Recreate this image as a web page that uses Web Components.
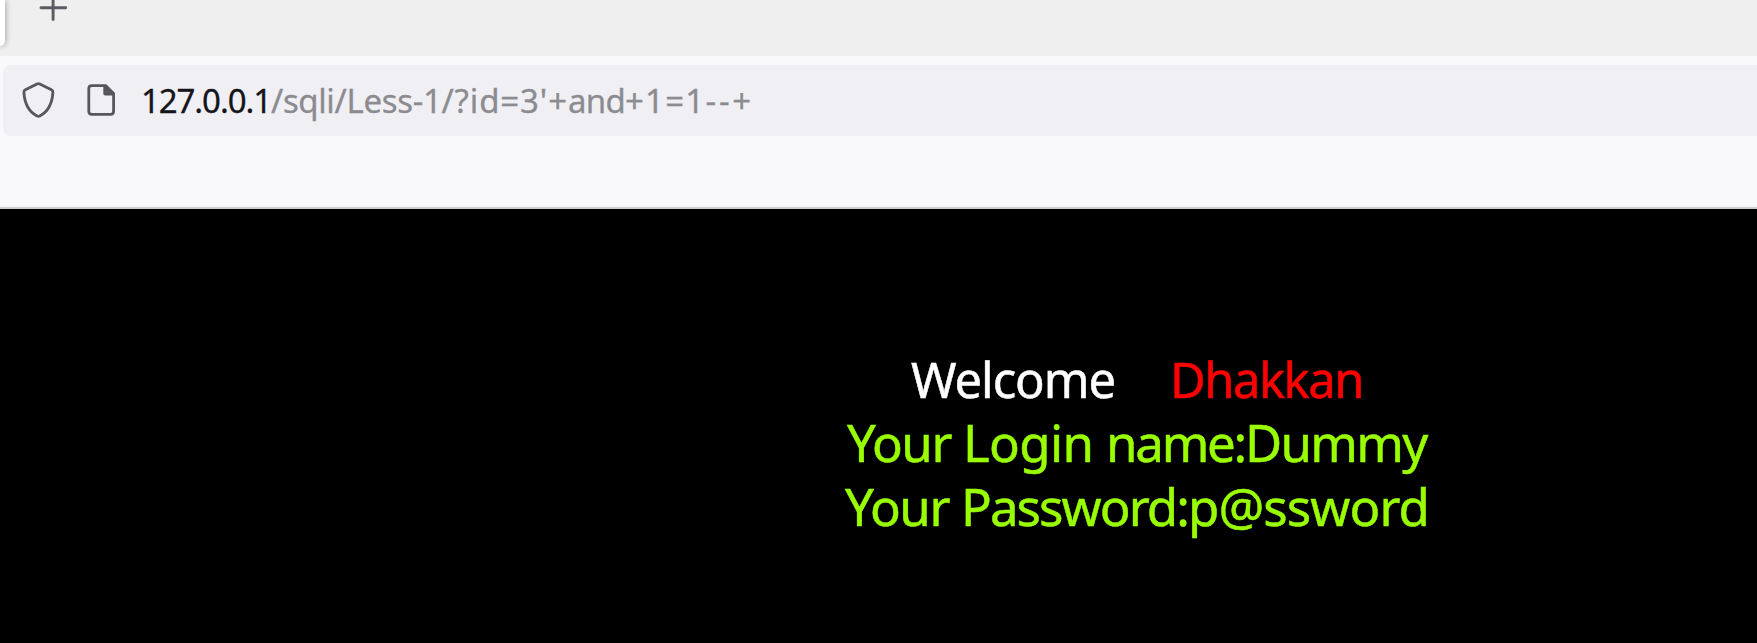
<!DOCTYPE html>
<html lang="en">
<head>
<meta charset="utf-8">
<title>Less-1</title>
<style>
html,body{margin:0;height:100%;overflow:hidden;background:#000}
body{font-family:"Noto Sans","Open Sans",sans-serif}
</style>
</head>
<body>
<browser-window></browser-window>
<script>
// Inline text run whose tracking is adjusted so that it spans a given advance width.
customElements.define('text-run', class extends HTMLElement {
  connectedCallback() {
    this.attachShadow({mode:'open'}).innerHTML = '<style>:host{display:inline;white-space:pre}</style><slot></slot>';
    const target = parseFloat(this.getAttribute('span'));
    const natural = this.getBoundingClientRect().width;
    this.style.letterSpacing = ((target - natural) / this.textContent.length).toFixed(4) + 'px';
  }
});

customElements.define('tab-strip', class extends HTMLElement {
  connectedCallback() {
    this.attachShadow({mode:'open'}).innerHTML = `<style>
      :host{display:flex;align-items:flex-start;height:56px;background:#efefef;overflow:hidden}
      .tab{width:5px;height:46px;background:#fff;border-radius:0 0 5px 0;box-shadow:0 0 6px rgba(0,0,0,.42)}
      svg{display:block;margin-left:33px}
    </style><div class="tab"></div>
    <svg width="32" height="24" viewBox="0 0 32 24" fill="none" stroke="#5b5b66" stroke-width="2.9" stroke-linecap="round"><path d="M3 7.7H27.7M15.1-4V19.6"/></svg>`;
  }
});

customElements.define('address-bar', class extends HTMLElement {
  connectedCallback() {
    this.attachShadow({mode:'open'}).innerHTML = `<style>
      :host{display:block;height:153px;box-sizing:border-box;padding:9px 0 0 3px;background:#f9f9fb;border-bottom:2px solid #cccecf}
      .field{display:flex;height:71px;box-sizing:border-box;background:#f0f0f4;border-radius:8px 0 0 8px}
      svg{display:block;flex:none}
      .url{margin-left:19px;font-size:33px;line-height:45px;padding-top:13px;color:#8b8b90;white-space:nowrap;-webkit-text-stroke:.3px currentColor}
      .host{color:#15141a}
    </style><div class="field">
      <svg width="119" height="71" viewBox="3 65 119 71" fill="none" stroke="#56565b" stroke-width="2.8" stroke-linejoin="round">
        <path d="M37 83.9Q38.4 83.2 39.8 83.9L51.4 89.8Q53 90.6 52.9 92.3C52.2 103.8 48.6 111.3 39.8 115.9Q38.4 116.7 37 115.9C28.2 111.3 24.6 103.8 23.9 92.3Q23.8 90.6 25.4 89.8Z"/>
        <path d="M91.8 85.6H105.6L113.6 93.5V111.3Q113.6 114.3 110.6 114.3H91.8Q88.8 114.3 88.8 111.3V88.6Q88.8 85.6 91.8 85.6Z"/>
        <path d="M103.3 85.6H105.6L113.6 93.5V95.4H105.3Q103.3 95.4 103.3 93.4Z" fill="#56565b" stroke="none"/>
      </svg>
      <div class="url"><span class="host"><text-run span="130">127.0.0.1</text-run></span><text-run span="63.5">/sqli</text-run><text-run span="107">/Less-1</text-run><text-run span="78.5">/?id=</text-run><text-run span="48">3'+</text-run><text-run span="57">and</text-run><text-run span="80.5">+1=1</text-run><text-run span="48.5">--+</text-run></div>
    </div>`;
  }
});

customElements.define('welcome-page', class extends HTMLElement {
  connectedCallback() {
    this.attachShadow({mode:'open'}).innerHTML = `<style>
      :host{display:block;flex:1;background:#000;padding:139px 0 0 845px;white-space:nowrap;-webkit-text-stroke:.5px currentColor}
      .line{height:64px;line-height:64px;font-size:51px;color:#9f0}
      .title{height:62px;line-height:63px;font-size:49px;color:#fff;padding-left:66px;display:flex;gap:55px}
      .name{color:red}
      .login{padding-left:2px}
    </style>
    <div class="line title"><div><text-run span="204">Welcome</text-run></div><div class="name"><text-run span="193">Dhakkan</text-run></div></div>
    <div class="line login"><text-run span="116">Your </text-run><text-run span="143">Login </text-run><text-run span="139">name:</text-run><text-run span="181.5">Dummy</text-run></div>
    <div class="line"><text-run span="116">Your </text-run><text-run span="227">Password:</text-run><text-run span="241">p@ssword</text-run></div>`;
  }
});

customElements.define('browser-window', class extends HTMLElement {
  connectedCallback() {
    this.attachShadow({mode:'open'}).innerHTML = `<style>:host{display:flex;flex-direction:column;height:100vh;overflow:hidden}</style>
    <tab-strip></tab-strip><address-bar></address-bar><welcome-page></welcome-page>`;
  }
});
</script>
</body>
</html>
